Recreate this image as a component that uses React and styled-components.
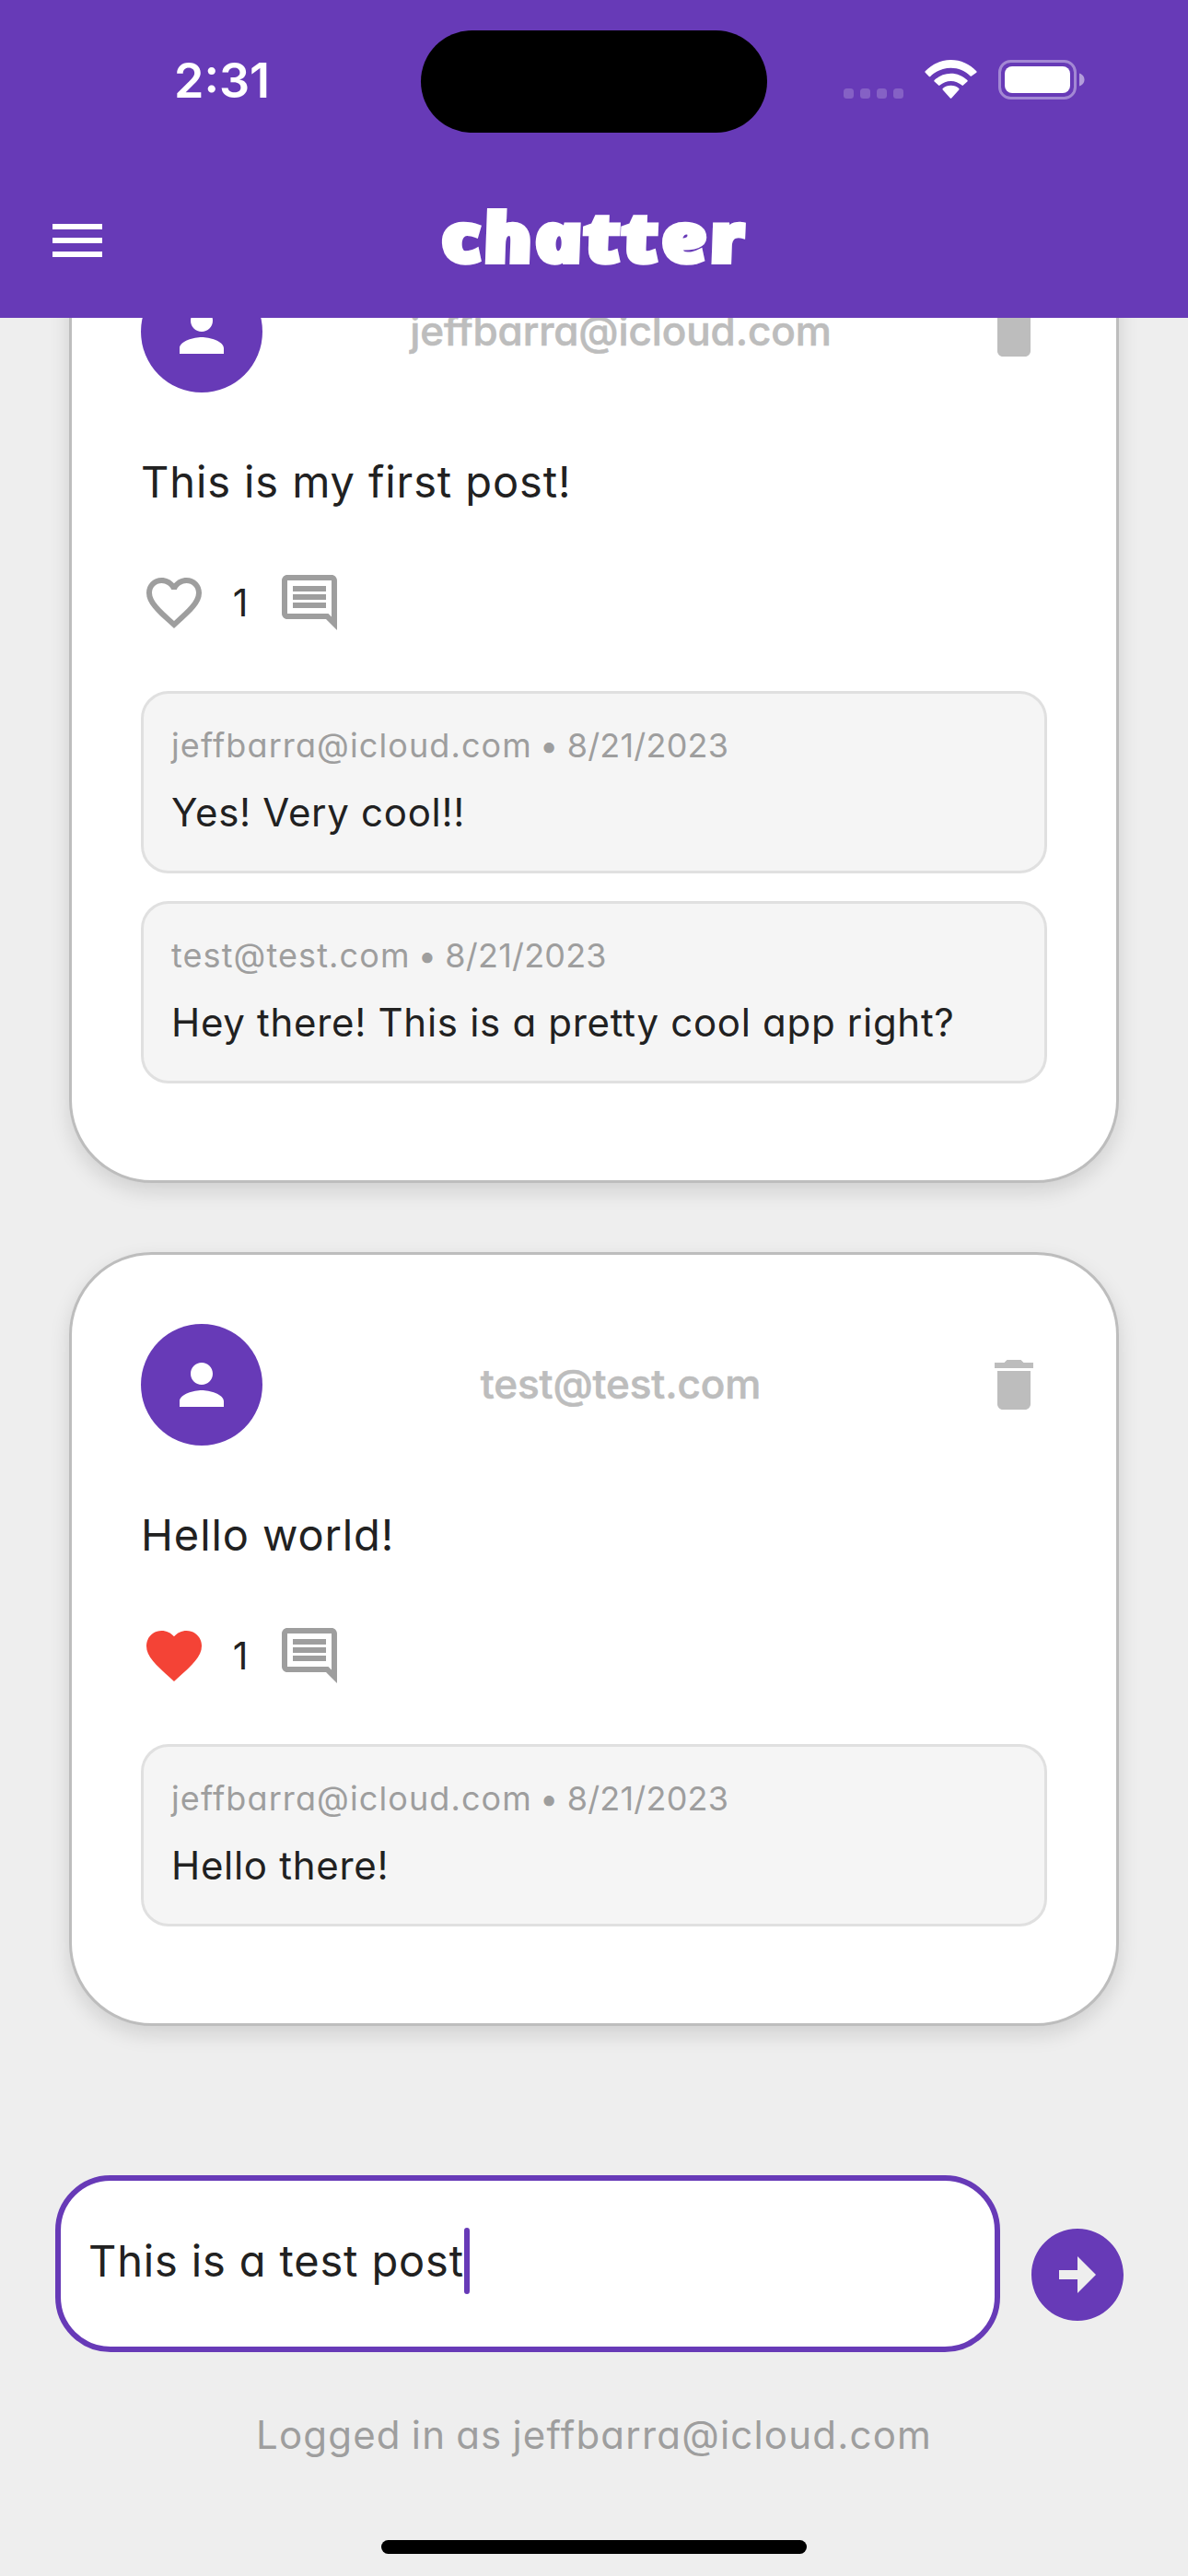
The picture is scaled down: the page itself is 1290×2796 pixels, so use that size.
import React from "react";
import styled, { createGlobalStyle } from "styled-components";

const PURPLE = "#673ab7";
const FONT = `Inter, "Open Sans", "Liberation Sans", sans-serif`;

const GlobalStyle = createGlobalStyle`
  *, *::before, *::after { box-sizing: border-box; }
  body { margin: 0; background: #eeeeee; }
`;

const Screen = styled.div`
  display: flex;
  flex-direction: column;
  width: 1290px;
  height: 2796px;
  background: #eeeeee;
  color: #212121;
  font-family: ${FONT};
  font-feature-settings: "cv11";
  overflow: hidden;
`;

const Header = styled.header`
  flex: none;
  height: 345px;
  background: ${PURPLE};
  color: #fff;
`;

const StatusBar = styled.div`
  display: grid;
  grid-template-columns: 457px 376px 457px;
  height: 177px;
`;

const Clock = styled.time`
  padding: 56px 0 0 189px;
  font-size: 52px;
  line-height: 64px;
  font-weight: 600;
  letter-spacing: 0;
`;

const Island = styled.div`
  height: 111px;
  margin-top: 33px;
  border-radius: 56px;
  background: #000;
`;

const StatusIcons = styled.div`
  display: flex;
  align-items: flex-start;
  gap: 23px;
  padding: 65px 0 0 83px;
  svg { display: block; flex: none; }
`;

const Signal = styled.div`
  display: flex;
  gap: 7px;
  margin-top: 31px;
`;

const SignalDot = styled.i`
  width: 11px;
  height: 11px;
  border-radius: 3.5px;
  background: rgba(255, 255, 255, 0.2);
`;

const AppBar = styled.div`
  display: grid;
  grid-template-columns: 120px 1fr 120px;
  align-items: center;
  height: 168px;
`;

const IconButton = styled.button`
  display: flex;
  align-items: center;
  justify-content: center;
  width: 72px;
  height: 72px;
  padding: 0;
  border: 0;
  background: none;
  color: ${(p) => p.$color};
`;

const MenuButton = styled(IconButton)`
  margin-left: 48px;
`;

const Brand = styled.h1`
  margin: 0 6px 11px 0;
  text-align: center;
  font-family: "Open Sans", sans-serif;
  font-style: italic;
  font-weight: 800;
  font-size: 75px;
  line-height: 100px;
  letter-spacing: 0.8px;
  transform: skewX(12deg) scaleX(1.18);
  -webkit-text-stroke: 4px #fff;
`;

const Feed = styled.main`
  flex: none;
  display: flex;
  flex-direction: column;
  gap: 75px;
  height: 1935px;
  padding: 0 75px;
  overflow: hidden;
`;

const Card = styled.article`
  flex: none;
  padding: 75px 75px 105px;
  border: 3px solid #bdbdbd;
  border-radius: 90px;
  background: #fff;
  box-shadow: 0 9px 22px rgba(0, 0, 0, 0.125);
  &:first-child { margin-top: -129px; }
`;

const CardHead = styled.div`
  display: flex;
  align-items: center;
  height: 132px;
`;

const Avatar = styled.div`
  display: flex;
  align-items: center;
  justify-content: center;
  width: 132px;
  height: 132px;
  border-radius: 50%;
  background: ${PURPLE};
  color: #fff;
`;

const Author = styled.div`
  flex: 1;
  padding: 0 2px 3px 0;
  text-align: center;
  color: #bdbdbd;
  font-size: 44px;
  font-weight: 500;
  line-height: 64px;
  letter-spacing: -0.1px;
  -webkit-text-stroke: 0.6px #bdbdbd;
`;

const PostText = styled.p`
  margin: 61px 0 59px;
  font-size: 47px;
  line-height: 72px;
  letter-spacing: 0.9px;
`;

const Actions = styled.div`
  display: flex;
  align-items: center;
  height: 72px;
  margin-bottom: 60px;
`;

const Likes = styled.span`
  width: 75px;
  padding-right: 3px;
  text-align: center;
  font-size: 41px;
  line-height: 70px;
`;

const Comments = styled.div`
  display: flex;
  flex-direction: column;
  gap: 30px;
`;

const Comment = styled.div`
  height: 198px;
  padding: 29px 30px 0;
  border: 3px solid #e0e0e0;
  border-radius: 30px;
  background: #f5f5f5;
`;

const CommentMeta = styled.div`
  color: #9e9e9e;
  font-size: 36px;
  line-height: 54px;
  letter-spacing: 1.1px;
  word-spacing: -3px;
`;

const CommentDate = styled.span`
  letter-spacing: 0.2px;
`;

const CommentText = styled.div`
  margin-top: 16px;
  font-size: 42px;
  line-height: 60px;
  letter-spacing: 0.7px;
`;

const Composer = styled.form`
  flex: none;
  display: flex;
  align-items: center;
  margin-top: 81px;
  padding: 0 60px;
  gap: 24px;
`;

const Field = styled.div`
  display: flex;
  align-items: center;
  width: 1026px;
  height: 192px;
  padding: 0 0 6px 30px;
  border: 6px solid ${PURPLE};
  border-radius: 60px;
  background: #fff;
  font-size: 47px;
  line-height: 72px;
  letter-spacing: 0.85px;
`;

const Caret = styled.i`
  width: 6px;
  height: 72px;
  border-radius: 3px;
  background: ${PURPLE};
`;

const SendButton = styled(IconButton)`
  flex: none;
  width: 120px;
  height: 120px;
  margin-top: 24px;
`;

const Footer = styled.footer`
  display: flex;
  flex-direction: column;
  align-items: center;
  padding-top: 57px;
`;

const LoggedIn = styled.div`
  color: #9e9e9e;
  font-size: 42px;
  line-height: 66px;
  letter-spacing: 1.2px;
  word-spacing: -2px;
`;

const HomeIndicator = styled.div`
  width: 462px;
  height: 15px;
  margin-top: 81px;
  border-radius: 8px;
  background: #000;
`;

const ICONS = {
  menu: "M3 18h18v-2H3v2zm0-5h18v-2H3v2zm0-7v2h18V6H3z",
  person: "M12 12c2.21 0 4-1.79 4-4s-1.79-4-4-4-4 1.79-4 4 1.79 4 4 4zm0 2c-2.67 0-8 1.34-8 4v2h16v-2c0-2.66-5.33-4-8-4z",
  trash: "M6 19c0 1.1.9 2 2 2h8c1.1 0 2-.9 2-2V7H6v12zM19 4h-3.5l-1-1h-5l-1 1H5v2h14V4z",
  heart: "M12 21.35l-1.45-1.32C5.4 15.36 2 12.28 2 8.5 2 5.42 4.42 3 7.5 3c1.74 0 3.41.81 4.5 2.09C13.09 3.81 14.76 3 16.5 3 19.58 3 22 5.42 22 8.5c0 3.78-3.4 6.86-8.55 11.54L12 21.35z",
  heartOutline: "M16.5 3c-1.74 0-3.41.81-4.5 2.09C10.91 3.81 9.24 3 7.5 3 4.42 3 2 5.42 2 8.5c0 3.78 3.4 6.86 8.55 11.54L12 21.35l1.45-1.32C18.6 15.36 22 12.28 22 8.5 22 5.42 19.58 3 16.5 3zm-4.4 15.55l-.1.1-.1-.1C7.14 14.24 4 11.39 4 8.5 4 6.5 5.5 5 7.5 5c1.54 0 3.04.99 3.57 2.36h1.87C13.46 5.99 14.96 5 16.5 5c2 0 3.5 1.5 3.5 3.5 0 2.89-3.14 5.74-7.9 10.05z",
  comment: "M21.99 4c0-1.1-.89-2-1.99-2H4c-1.1 0-2 .9-2 2v12c0 1.1.9 2 2 2h14l4 4-.01-18zM20 4v13.17L18.83 16H4V4h16zM6 12h12v2H6zm0-3h12v2H6zm0-3h12v2H6z",
  send: "M22 12c0-5.52-4.48-10-10-10S2 6.48 2 12s4.48 10 10 10 10-4.48 10-10zm-10 1H8v-2h4V8l4 4-4 4v-3z",
};

const Icon = ({ name, size = 72 }) => (
  <svg width={size} height={size} viewBox="0 0 24 24" fill="currentColor" aria-hidden="true">
    <path d={ICONS[name]} />
  </svg>
);

const Wifi = () => (
  <svg width="57" height="42" viewBox="0 0 57 42" fill="#fff">
    <path d="M28.5 8.7c8.1 0 15.5 3.1 21.1 8.7.4.4 1 .4 1.4 0l5.3-3.7c.4-.4.4-1.1 0-1.5C48.9 4.6 39.2 0 28.5 0S8.1 4.6.7 12.2c-.4.4-.4 1.1 0 1.5l4.1 4.2c.4.4 1 .4 1.4 0C12.2 12 20.1 8.7 28.5 8.7z" />
    <path d="M28.5 22.9c4.4 0 8.7 1.7 12 4.7.4.4 1 .4 1.4 0l4.5-4c.4-.4.4-1.1 0-1.5-4.9-4.7-11.2-7.3-17.9-7.3s-13 2.6-17.9 7.3c-.4.4-.4 1.1 0 1.5l4.5 4c.4.4 1 .4 1.4 0 3.3-3 7.6-4.7 12-4.7z" />
    <path d="M37.3 32.5c.4-.4.4-1.1 0-1.5a13.4 13.4 0 0 0-17.6 0c-.4.4-.4 1.1 0 1.5l8.1 9c.4.4 1 .4 1.4 0z" />
  </svg>
);

const Battery = () => (
  <svg width="95" height="43" viewBox="0 0 95 43">
    <rect x="1.5" y="1.5" width="82" height="40" rx="12" fill="none" stroke="#fff" strokeOpacity=".4" strokeWidth="3" />
    <rect x="7" y="7" width="71" height="29" rx="8" fill="#fff" />
    <path d="M88 14.5c3 1 5.5 3.5 5.5 7s-2.5 6-5.5 7z" fill="#fff" fillOpacity=".5" />
  </svg>
);

const posts = [
  {
    author: "jeffbarra@icloud.com",
    text: "This is my first post!",
    liked: false,
    likes: 1,
    comments: [
      { by: "jeffbarra@icloud.com", date: "8/21/2023", text: "Yes! Very cool!!" },
      { by: "test@test.com", date: "8/21/2023", text: "Hey there! This is a pretty cool app right?" },
    ],
  },
  {
    author: "test@test.com",
    text: "Hello world!",
    liked: true,
    likes: 1,
    comments: [{ by: "jeffbarra@icloud.com", date: "8/21/2023", text: "Hello there!" }],
  },
];

const Post = ({ post }) => (
  <Card>
    <CardHead>
      <Avatar><Icon name="person" /></Avatar>
      <Author>{post.author}</Author>
      <IconButton $color="#bdbdbd" aria-label="Delete"><Icon name="trash" /></IconButton>
    </CardHead>
    <PostText>{post.text}</PostText>
    <Actions>
      <IconButton $color={post.liked ? "#f44336" : "#9e9e9e"} aria-label="Like">
        <Icon name={post.liked ? "heart" : "heartOutline"} />
      </IconButton>
      <Likes>{post.likes}</Likes>
      <IconButton $color="#9e9e9e" aria-label="Comment"><Icon name="comment" /></IconButton>
    </Actions>
    <Comments>
      {post.comments.map((c) => (
        <Comment key={c.by}>
          <CommentMeta>{`${c.by} • `}<CommentDate>{c.date}</CommentDate></CommentMeta>
          <CommentText>{c.text}</CommentText>
        </Comment>
      ))}
    </Comments>
  </Card>
);

export default function App() {
  return (
    <>
      <GlobalStyle />
      <Screen>
        <Header>
          <StatusBar>
            <Clock>2:31</Clock>
            <Island />
            <StatusIcons>
              <Signal><SignalDot /><SignalDot /><SignalDot /><SignalDot /></Signal>
              <Wifi />
              <Battery />
            </StatusIcons>
          </StatusBar>
          <AppBar>
            <MenuButton $color="#fff" aria-label="Menu"><Icon name="menu" /></MenuButton>
            <Brand>chatter</Brand>
          </AppBar>
        </Header>
        <Feed>
          {posts.map((p) => <Post key={p.author} post={p} />)}
        </Feed>
        <Composer>
          <Field>This is a test post<Caret /></Field>
          <SendButton type="button" $color={PURPLE} aria-label="Send"><Icon name="send" size={120} /></SendButton>
        </Composer>
        <Footer>
          <LoggedIn>Logged in as jeffbarra@icloud.com</LoggedIn>
          <HomeIndicator />
        </Footer>
      </Screen>
    </>
  );
}
